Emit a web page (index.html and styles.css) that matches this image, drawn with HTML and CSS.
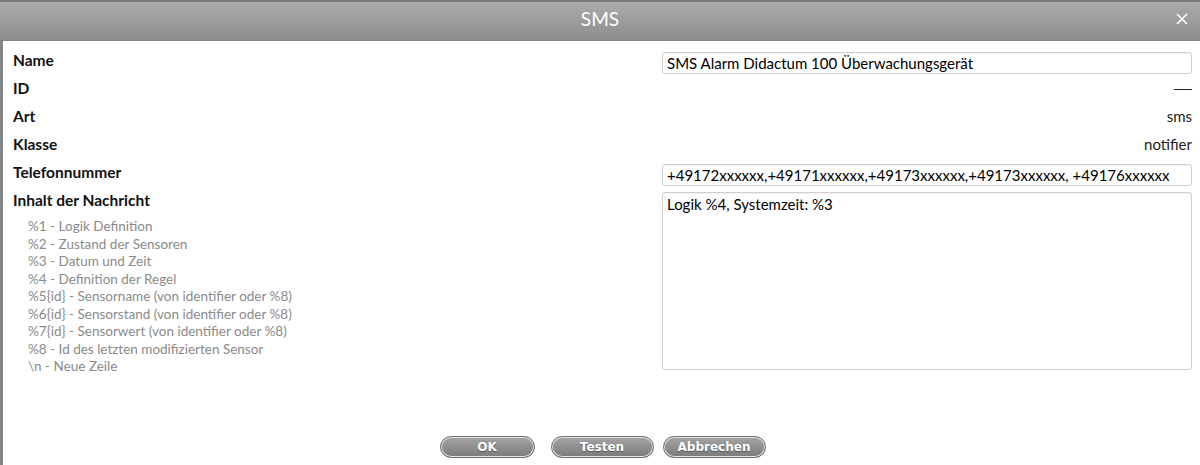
FILE: index.html
```html
<!DOCTYPE html>
<html>
<head>
  <title>SMS</title>
  <link rel="stylesheet" href="styles.css">
</head>
<body>
  <div class="dialog">
    <div class="titlebar">
      <span class="title">SMS</span>
      <button class="close" title="Schließen">
        <svg width="12" height="12" viewBox="0 0 12 12"><path d="M1 1L11 11M11 1L1 11" stroke="#fff" stroke-width="1.6" fill="none"/></svg>
      </button>
    </div>

    <div class="content">
      <div class="row">
        <div class="label">Name</div>
        <input class="field" type="text" value="SMS Alarm Didactum 100 Überwachungsgerät">
      </div>
      <div class="row">
        <div class="label">ID</div>
        <div class="value dash">—</div>
      </div>
      <div class="row">
        <div class="label">Art</div>
        <div class="value">sms</div>
      </div>
      <div class="row">
        <div class="label">Klasse</div>
        <div class="value">notifier</div>
      </div>
      <div class="row">
        <div class="label">Telefonnummer</div>
        <input class="field" type="text" value="+49172xxxxxx,+49171xxxxxx,+49173xxxxxx,+49173xxxxxx, +49176xxxxxx">
      </div>
      <div class="row">
        <div>
          <div class="label">Inhalt der Nachricht</div>
          <ul class="help">
            <li>%1 - Logik Definition</li>
            <li>%2 - Zustand der Sensoren</li>
            <li>%3 - Datum und Zeit</li>
            <li>%4 - Definition der Regel</li>
            <li>%5{id} - Sensorname (von identifier oder %8)</li>
            <li>%6{id} - Sensorstand (von identifier oder %8)</li>
            <li>%7{id} - Sensorwert (von identifier oder %8)</li>
            <li>%8 - Id des letzten modifizierten Sensor</li>
            <li>\n - Neue Zeile</li>
          </ul>
        </div>
        <textarea class="field message">Logik %4, Systemzeit: %3</textarea>
      </div>
    </div>

    <div class="buttons">
      <button class="btn btn-ok">OK</button>
      <button class="btn">Testen</button>
      <button class="btn">Abbrechen</button>
    </div>
  </div>
</body>
</html>
```

FILE: styles.css
```css
body {
  margin: 0;
  background: #7a7a7a;
  font-family: Lato, "Open Sans", sans-serif;
}

.dialog {
  height: 465px;
  display: flex;
  flex-direction: column;
  background: #fff;
  border-left: 3px solid #858585;
  box-sizing: border-box;
}

.titlebar {
  height: 41px;
  display: flex;
  align-items: center;
  justify-content: center;
  position: relative;
  background: linear-gradient(to bottom, #ababab, #8d8d8d);
  border-top: 2px solid #7c7c7c;
  border-bottom: 1px solid #818181;
  box-sizing: border-box;
  margin-left: -3px;
}

.title {
  color: #fff;
  font-size: 19px;
  margin-top: -6px;
}

.close {
  position: absolute;
  right: 12px;
  top: 11px;
  padding: 0;
  border: none;
  background: none;
  line-height: 0;
  cursor: pointer;
}

.content {
  padding: 8px 8px 0 10px;
  display: flex;
  flex-direction: column;
  gap: 6px;
}

.row {
  display: grid;
  grid-template-columns: 1fr 530px;
  align-items: start;
}

.label {
  font-weight: bold;
  font-size: 15.5px;
  line-height: 22px;
  color: #111;
}

.value {
  text-align: right;
  font-size: 15px;
  line-height: 22px;
  color: #222;
}

.dash {
  font-family: "Liberation Sans", sans-serif;
  font-size: 14px;
  transform: scaleX(1.3);
  transform-origin: right center;
}

.field {
  margin: 3px 0 -3px;
  height: 22px;
  padding: 0 4px;
  border: 1px solid #cfcfcf;
  border-radius: 3px;
  box-shadow: inset 0 1px 1px rgba(0, 0, 0, 0.06);
  font-family: inherit;
  font-size: 15px;
  color: #000;
  box-sizing: border-box;
  width: 100%;
}

.message {
  height: 178px;
  margin-bottom: 0;
  padding: 2px 4px;
  resize: none;
  line-height: 18px;
}

.help {
  list-style: none;
  margin: 7px 0 0;
  padding: 0 0 0 15px;
  font-size: 13.5px;
  line-height: 17.5px;
  color: #8a8a8a;
}

.buttons {
  margin-top: auto;
  padding-bottom: 7px;
  display: flex;
  justify-content: center;
  gap: 9px;
  padding-left: 2px;
}

.btn {
  width: 103px;
  height: 22px;
  border-radius: 11px;
  border: 1px solid #6f6f6f;
  box-shadow: inset 0 0 0 1px #e6e6e6;
  background: linear-gradient(to bottom, #a4a4a4, #7b7b7b);
  color: #fff;
  font-family: "DejaVu Sans", Verdana, sans-serif;
  font-weight: bold;
  font-size: 12px;
  text-shadow: 0 1px 1px rgba(0, 0, 0, 0.4);
  cursor: pointer;
}

.btn-ok {
  width: 95px;
  margin-right: 7px;
}
```
